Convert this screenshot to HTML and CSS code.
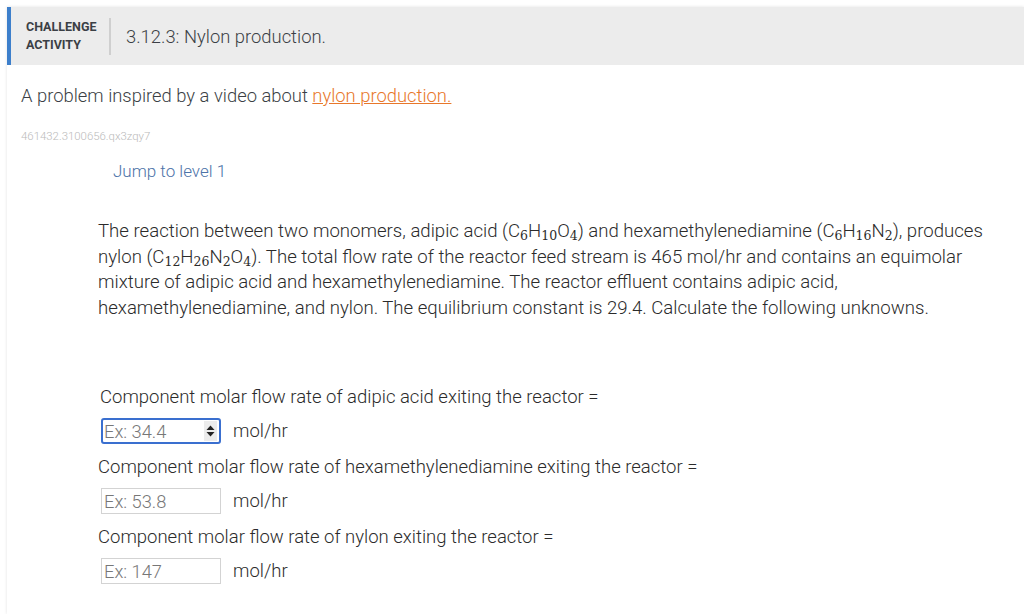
FILE: index.html
```html
<!DOCTYPE html>
<html>
<head>
<meta charset="utf-8">
<link rel="stylesheet" href="styles.css">
</head>
<body>
<div class="card">
  <div class="header">
    <div class="kind">CHALLENGE<br>ACTIVITY</div>
    <div class="divider"></div>
    <div class="title">3.12.3: Nylon production.</div>
  </div>
  <div class="content">
    <p class="intro">A problem inspired by a video about <a class="link" href="#">nylon production.</a></p>
    <p class="id">461432.3100656.qx3zqy7</p>
    <p class="jump">Jump to level 1</p>
    <div class="problem">
      <p class="statement">The reaction between two monomers, adipic acid (<span class="f">C<sub>6</sub>H<sub>10</sub>O<sub>4</sub></span>) and hexamethylenediamine (<span class="f">C<sub>6</sub>H<sub>16</sub>N<sub>2</sub></span>), produces nylon (<span class="f">C<sub>12</sub>H<sub>26</sub>N<sub>2</sub>O<sub>4</sub></span>). The total flow rate of the reactor feed stream is 465 mol/hr and contains an equimolar mixture of adipic acid and hexamethylenediamine. The reactor effluent contains adipic acid, hexamethylenediamine, and nylon. The equilibrium constant is 29.4. Calculate the following unknowns.</p>
      <div class="questions">
        <p class="label first">Component molar flow rate of adipic acid exiting the reactor =</p>
        <div class="row">
          <div class="input focus"><span class="ph">Ex: 34.4</span><span class="spin"><svg width="9" height="16" viewBox="0 0 9 16"><path d="M4.5 2.5 L8.5 7 H0.5 Z" fill="#222"/><path d="M4.5 13.5 L8.5 9 H0.5 Z" fill="#222"/></svg></span></div>
          <span class="unit">mol/hr</span>
        </div>
        <p class="label">Component molar flow rate of hexamethylenediamine exiting the reactor =</p>
        <div class="row">
          <div class="input"><span class="ph">Ex: 53.8</span></div>
          <span class="unit">mol/hr</span>
        </div>
        <p class="label">Component molar flow rate of nylon exiting the reactor =</p>
        <div class="row">
          <div class="input"><span class="ph">Ex: 147</span></div>
          <span class="unit">mol/hr</span>
        </div>
      </div>
    </div>
  </div>
</div>
</body>
</html>
```
FILE: styles.css
```css
html, body {
  margin: 0;
  padding: 0;
  background: #fff;
  font-family: Roboto, "Liberation Sans", sans-serif;
  font-weight: 300;
  color: #333;
}
.card {
  margin: 7px 0 0 7px;
  box-shadow: 0 0 3px rgba(0,0,0,0.12);
  min-height: 607px;
}
.header {
  height: 58px;
  background: #ececec;
  border-left: 4px solid #3d7fcb;
  display: flex;
  align-items: center;
}
.kind {
  padding-left: 15px;
  font-size: 12.5px;
  font-weight: 700;
  line-height: 18px;
  color: #3b3f45;
  width: 72px;
  padding-bottom: 1px;
}
.divider {
  width: 2px;
  height: 37px;
  background: #cfcfcf;
  margin-left: 11px;
  margin-right: 15px;
}
.title {
  font-size: 18.4px;
  color: #3b3f45;
}
.content {
  padding-left: 14px;
}
p { margin: 0; }
.intro {
  margin-top: 20px;
  font-size: 18.4px;
  line-height: 22px;
  color: #3b3f45;
}
.link {
  color: #e8772a;
  text-decoration: underline;
}
.id {
  margin-top: 23px;
  font-size: 11.4px;
  line-height: 13px;
  color: #bababa;
}
.jump {
  margin-top: 18px;
  margin-left: 92px;
  font-size: 17px;
  line-height: 20px;
  color: #4d73a8;
}
.problem {
  padding-left: 77px;
}
.statement {
  margin-top: 38px;
  font-size: 18.6px;
  line-height: 25.5px;
  color: #2b2b2b;
  padding-right: 30px;
}
.f sub {
  font-family: "DejaVu Serif", "Liberation Serif", serif;
  font-size: 12.5px;
  vertical-align: -3px;
  line-height: 0;
}
.questions {
  margin-top: 65px;
}
.label {
  font-size: 18.5px;
  line-height: 22px;
  color: #2b2b2b;
}
.label.first { margin-left: 2px; }
.row {
  display: flex;
  align-items: center;
  margin: 10px 0 12px 3px;
}
.input {
  box-sizing: border-box;
  width: 120px;
  height: 26px;
  border: 1px solid #d3d3d3;
  display: flex;
  align-items: center;
  justify-content: space-between;
  padding-left: 2px;
  padding-right: 4px;
}
.input.focus {
  border: 2px solid #3a6fcf;
  border-radius: 3px;
  padding-left: 1px;
  padding-right: 2px;
}
.ph {
  font-size: 18.3px;
  color: #777;
}
.spin {
  display: flex;
  align-items: center;
  justify-content: center;
  background: #ececec;
  width: 13px;
  height: 20px;
}
.unit {
  margin-left: 12px;
  font-size: 18.5px;
  color: #2b2b2b;
}
```
